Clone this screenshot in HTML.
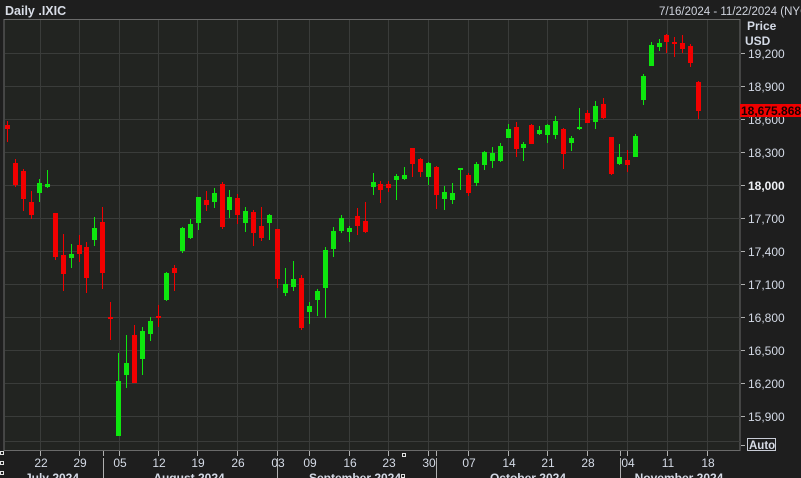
<!DOCTYPE html>
<html><head><meta charset="utf-8"><style>
html,body{margin:0;padding:0;background:#1e1e1e;width:801px;height:478px;overflow:hidden}
svg{display:block}
text{font-family:"Liberation Sans",sans-serif}
</style></head><body>
<svg width="801" height="478" viewBox="0 0 801 478" xmlns="http://www.w3.org/2000/svg">
<rect width="801" height="478" fill="#1e1e1e"/>
<text x="5" y="15" font-size="12.5" font-weight="bold" fill="#d8dce6">Daily .IXIC</text>
<text x="659" y="15" font-size="11.5" fill="#d0d4de">7/16/2024 - 11/22/2024 (NYC)</text>
<rect x="4" y="19.5" width="736" height="431" fill="#222421" stroke="#6a6a6a" stroke-width="1"/>
<g stroke="#3a3c3a" stroke-width="1">
<path d="M5 53.5H740M5 86.5H740M5 119.5H740M5 152.5H740M5 185.5H740M5 218.5H740M5 251.5H740M5 284.5H740M5 317.5H740M5 350.5H740M5 383.5H740M5 416.5H740M5 441.5H740"/>
<path d="M40.5 20V450M79.5 20V450M119.5 20V450M158.5 20V450M197.5 20V450M237.5 20V450M277.5 20V450M309.5 20V450M349.5 20V450M388.5 20V450M428.5 20V450M468.5 20V450M508.5 20V450M547.5 20V450M587.5 20V450M627.5 20V450M667.5 20V450M707.5 20V450"/>
</g>
<g stroke="#0ee60e">
<path stroke-width="1" d="M39.5 179V202M47.5 170V188M71.5 244V268M94.5 217V246M118.5 353V436M126.5 335V388M142.5 327V375M150.5 317V341M166.5 272V301M182.5 227V253M190.5 219V239M198.5 197V230M214.5 188V208M229.5 190V218M245.5 207V232M269.5 214V240M285.5 268V296M293.5 261V291M309.5 302V324M317.5 289V316M325.5 247V318M333.5 227V257M341.5 215V233M349.5 226V242M373.5 173V195M396.5 174V200M404.5 167V180M428.5 162V185M444.5 186V210M452.5 183V204M460.5 168V190M476.5 162V186M484.5 151V170M492.5 147V168M500.5 143V162M508.5 124V138M523.5 142V161M539.5 126V135M547.5 124V143M555.5 116V139M571.5 136V151M579.5 108V130M595.5 101V129M619.5 144V165M635.5 134V157M643.5 74V105M651.5 42V66M659.5 39V51"/>
<path stroke-width="5" d="M39.5 183V193M47.5 184V187M71.5 254V258M94.5 228V240M118.5 381V436M126.5 363V375M142.5 331V359M150.5 321V334M166.5 273V300M182.5 228V251M190.5 224V238M198.5 197V223M214.5 193V202M229.5 197V210M245.5 211V223M269.5 215V223M285.5 284V293M293.5 279V287M309.5 306V312M317.5 291V300M325.5 250V288M333.5 231V249M341.5 218V231M349.5 228V232M373.5 182V187M396.5 176V180M404.5 175V179M428.5 163V177M444.5 192V199M452.5 193V200M460.5 168V170M476.5 164V183M484.5 152V165M492.5 153V161M500.5 146V161M508.5 129V138M523.5 144V148M539.5 130V134M547.5 125V135M555.5 121V135M571.5 138V143M579.5 127V129M595.5 106V122M619.5 157V164M635.5 136V157M643.5 76V100M651.5 45V66M659.5 43V47"/>
</g>
<g stroke="#f20000">
<path stroke-width="1" d="M7.5 121V142M15.5 159V187M23.5 169V211M31.5 191V219M55.5 213V260M63.5 234V291M79.5 235V262M86.5 242V293M102.5 207V289M110.5 302V340M134.5 325V383M158.5 305V327M174.5 265V291M206.5 191V211M222.5 182V229M237.5 194V224M253.5 210V246M261.5 207V241M277.5 229V288M301.5 275V330M357.5 208V235M365.5 202V233M380.5 181V203M388.5 181V192M412.5 148V177M420.5 158V177M436.5 166V209M468.5 173V196M516.5 122V157M531.5 124V144M563.5 128V169M587.5 110V123M603.5 98V119M611.5 137V175M627.5 150V172M666.5 34V53M674.5 37V57M682.5 35V53M690.5 44V67M698.5 81V119"/>
<path stroke-width="5" d="M7.5 125V129M15.5 163V185M23.5 171V199M31.5 202V215M55.5 213V257M63.5 255V274M79.5 245V254M86.5 247V278M102.5 222V273M110.5 317V319M134.5 335V383M158.5 316V318M174.5 268V273M206.5 200V205M222.5 184V227M237.5 198V215M253.5 212V233M261.5 226V238M277.5 229V279M301.5 278V328M357.5 216V226M365.5 221V232M380.5 184V190M388.5 184V188M412.5 148V164M420.5 159V172M436.5 167V195M468.5 175V193M516.5 127V149M531.5 125V144M563.5 129V154M587.5 113V123M603.5 104V118M611.5 137V174M627.5 160V165M666.5 35V42M674.5 42V44M682.5 43V49M690.5 46V63M698.5 82V111"/>
</g>
<g fill="#d4dae6" font-size="12">
<text x="747" y="30" font-weight="bold">Price</text>
<text x="745" y="45" font-weight="bold">USD</text>
</g>
<g stroke="#b0b0b0" stroke-width="1">
<path d="M741 53.5H745M741 86.5H745M741 119.5H745M741 152.5H745M741 185.5H745M741 218.5H745M741 251.5H745M741 284.5H745M741 317.5H745M741 350.5H745M741 383.5H745M741 416.5H745M741 445.5H745"/>
</g>
<g fill="#d4dae6" font-size="12">
<text x="748" y="58">19,200</text>
<text x="748" y="91">18,900</text>
<text x="748" y="124">18,600</text>
<text x="748" y="157">18,300</text>
<text x="748" y="190" font-weight="bold" fill="#eef0f4">18,000</text>
<text x="748" y="223">17,700</text>
<text x="748" y="256">17,400</text>
<text x="748" y="289">17,100</text>
<text x="748" y="322">16,800</text>
<text x="748" y="355">16,500</text>
<text x="748" y="388">16,200</text>
<text x="748" y="421">15,900</text>
</g>
<rect x="740" y="104" width="61" height="13" fill="#f00000"/>
<text x="741" y="115" font-size="12" font-weight="bold" fill="#1a0000">18,675.868</text>
<rect x="747.5" y="438.5" width="28" height="12" fill="none" stroke="#c8ccd6"/>
<text x="749" y="449" font-size="11.5" font-weight="bold" fill="#d8dce6">Auto</text>
<g stroke="#b0b0b0" stroke-width="1">
<path d="M40.5 451V456M79.5 451V456M103.5 451V456M119.5 451V456M158.5 451V456M197.5 451V456M237.5 451V456M277.5 451V456M309.5 451V456M349.5 451V456M388.5 451V456M428.5 451V456M436.5 451V456M468.5 451V456M508.5 451V456M547.5 451V456M587.5 451V456M620.5 451V456M627.5 451V456M667.5 451V456M707.5 451V456"/>
<path d="M103.5 458V478M277.5 458V478M436.5 458V478M620.5 458V478"/>
</g>
<g fill="none" stroke="#e0e0e0" stroke-width="1">
<rect x="0.5" y="451.5" width="3" height="3"/><rect x="0.5" y="461.5" width="3" height="3"/><rect x="0.5" y="471.5" width="3" height="3"/>
<rect x="402.5" y="453.5" width="3" height="3"/><rect x="401.5" y="474.5" width="3" height="3"/>
</g>
<g fill="#d4dae6" font-size="12" text-anchor="middle">
<text x="41" y="467">22</text><text x="80" y="467">29</text><text x="120" y="467">05</text><text x="159" y="467">12</text><text x="198" y="467">19</text><text x="238" y="467">26</text><text x="278" y="467">03</text><text x="310" y="467">09</text><text x="350" y="467">16</text><text x="389" y="467">23</text><text x="429" y="467">30</text><text x="469" y="467">07</text><text x="509" y="467">14</text><text x="548" y="467">21</text><text x="588" y="467">28</text><text x="628" y="467">04</text><text x="668" y="467">11</text><text x="708" y="467">18</text>
</g>
<g fill="#d4dae6" font-size="12" font-weight="bold" text-anchor="middle">
<text x="52" y="482">July 2024</text><text x="189" y="482">August 2024</text><text x="355" y="482">September 2024</text><text x="528" y="482">October 2024</text><text x="679" y="482">November 2024</text>
</g>
</svg>
</body></html>
